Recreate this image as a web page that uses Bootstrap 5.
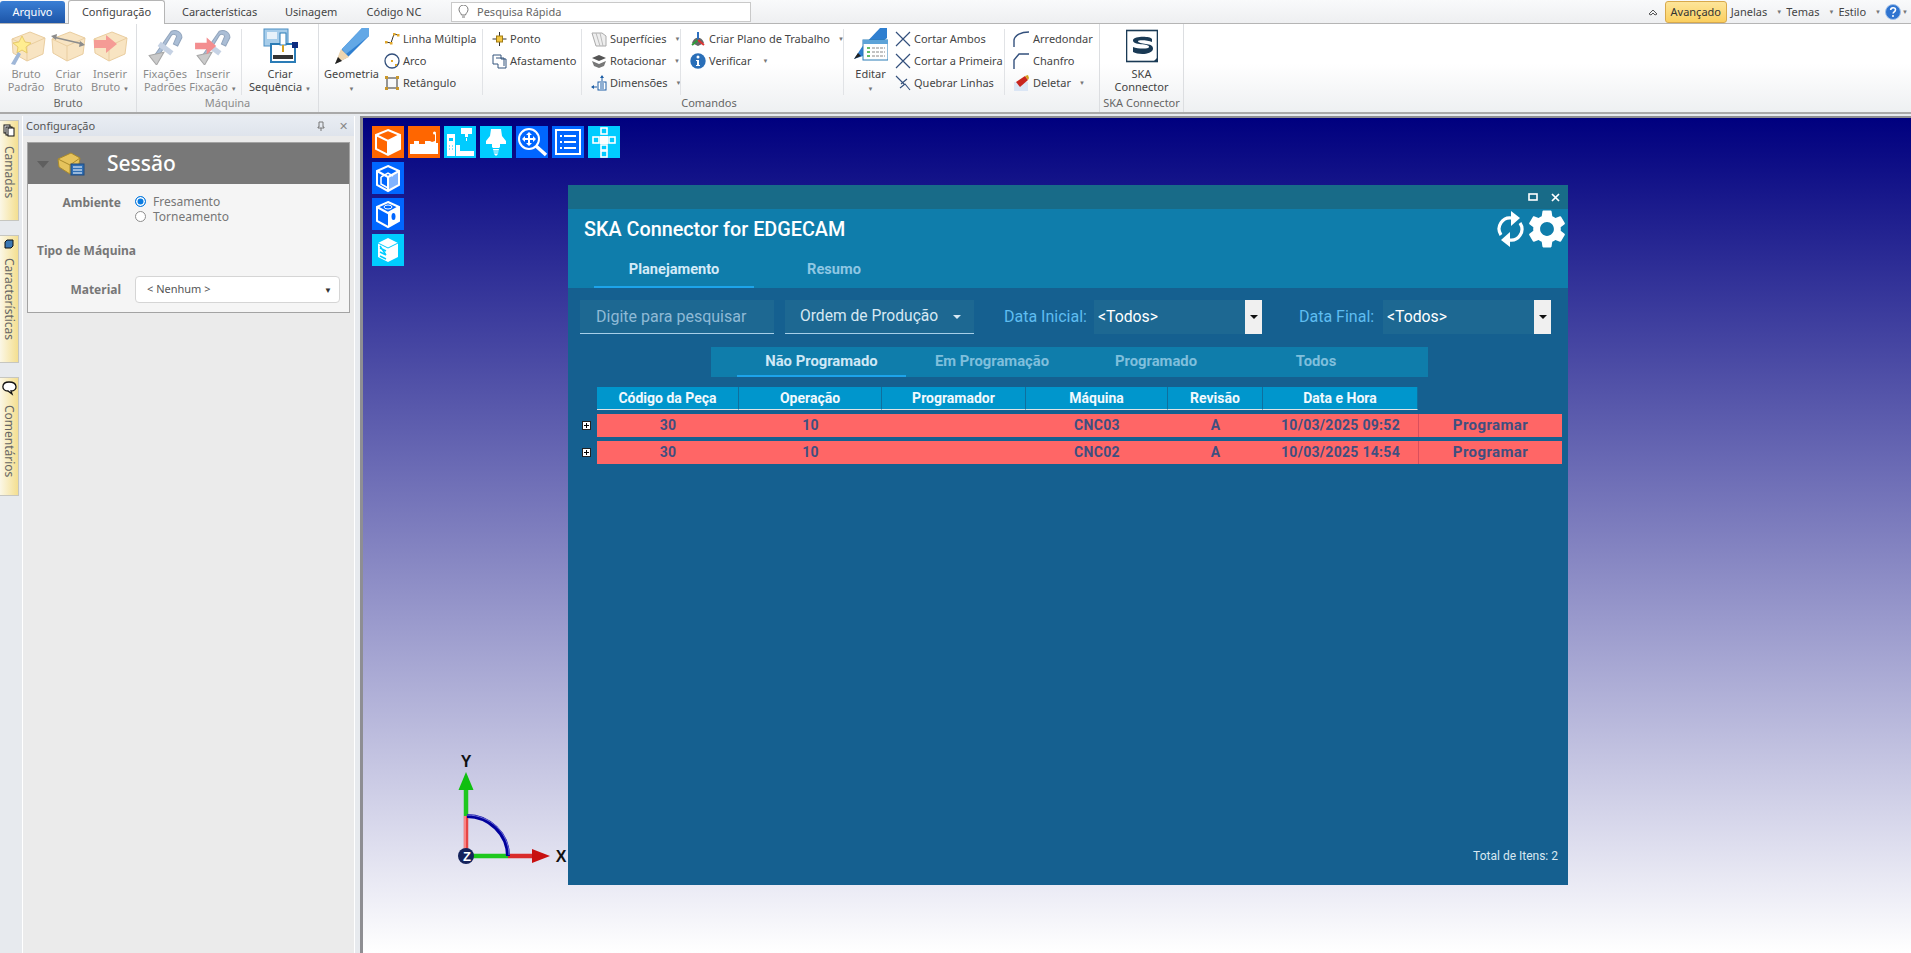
<!DOCTYPE html>
<html lang="pt-BR">
<head>
  <meta charset="UTF-8">
  <title>SKA Connector for EDGECAM</title>
  <link rel="stylesheet" href="https://cdn.jsdelivr.net/npm/bootstrap@5.3.1/dist/css/bootstrap.min.css">
  <style>
    html, body { height: 100%; overflow: hidden; }
    body { width: 1911px; height: 953px; background: #e7eaee; font-family: "Noto Sans", "Open Sans", sans-serif; font-size: 11px; color: #444; }
    svg { display: block; flex-shrink: 0; }
    .arr { font-size: 6px; color: #777; }

    /* top strip */
    .strip { height: 24px; background: linear-gradient(#f9fafb, #eeeff1); border-bottom: 1px solid #b5b5b5; padding-top: 1px; }
    .file-tab { width: 65px; height: 22px; background: linear-gradient(#3a7fd5, #1d55a8); color: #fff; border-radius: 3px 3px 0 0; font-size: 11px; }
    .tab-on { width: 97px; height: 24px; margin-left: 3px; background: #fff; border: 1px solid #b5b5b5; border-bottom: 0; border-radius: 3px 3px 0 0; }
    .tab-a { margin-left: 17px; width: 73px; }
    .tab-b { margin-left: 30px; width: 51px; }
    .tab-c { margin-left: 30px; width: 56px; }
    .quick { margin-left: 29px; width: 300px; height: 20px; background: #fff; border: 1px solid #c9c9c9; padding-left: 6px; color: #666; gap: 8px; }
    .adv { width: 62px; height: 22px; background: linear-gradient(#fde59a, #fbcf5f); border: 1px solid #d8a94c; border-radius: 3px; color: #333; margin: 0 4px 0 7px; }
    .rm-arr { margin: 0 4px 0 9px; }
    .rm-end { margin-left: 1px; margin-right: 3px; }

    /* ribbon */
    .ribbon { height: 90px; background: linear-gradient(#fff 45%, #eef0f2); border-bottom: 2px solid #a9a9a9; }
    .group { border-right: 1px solid #dcdee1; height: 88px; flex-shrink: 0; }
    .g-bruto { width: 137px; }
    .g-maq { width: 182px; }
    .g-cmd { width: 781px; }
    .g-ska { width: 84px; }
    .g-body { height: 73px; padding-top: 3px; }
    .g-label { height: 13px; line-height: 12px; text-align: center; color: #666; }
    .big { height: 70px; line-height: 13px; text-align: center; flex-shrink: 0; }
    .big svg { margin-bottom: 2px; height: 38px; }
    .dim { color: #8b8b8b; }
    .dim svg { opacity: .75; }
    .w42 { width: 42px; } .w48 { width: 48px; } .w65 { width: 65px; } .w76 { width: 76px; } .w49 { width: 49px; margin-left: 2px; }
    .sep { width: 1px; height: 66px; background: #e1e3e6; margin-top: 2px; flex-shrink: 0; }
    .small-item { height: 22px; gap: 3px; white-space: nowrap; }
    .small-col { flex-shrink: 0; padding-top: 1px; }
    .sc-a { width: 98px; } .sc-b { width: 98px; padding-left: 9px; } .sc-c { width: 98px; padding-left: 9px; }
    .sc-d { width: 162px; padding-left: 9px; } .sc-e { width: 109px; } .sc-f { width: 94px; padding-left: 8px; }
    .ml-arr { margin-left: 5px; }

    .main { height: 837px; margin-top: 2px; }
    /* side tabs */
    .side { width: 22px; padding-top: 4px; gap: 14px; }
    .vtab { width: 19px; background: linear-gradient(90deg, #fbf7e6, #f4df90); border: 1px solid #c6c6c0; border-left: 0; padding-top: 3px; color: #666; font-size: 12px; }
    .vtab span { writing-mode: vertical-rl; margin-top: 9px; line-height: 17px; }
    .vt-1 { height: 101px; } .vt-2 { height: 128px; } .vt-3 { height: 119px; }

    /* left panel */
    .panel { width: 333px; background: #ebebeb; border-left: 1px solid #fff; border-right: 1px solid #fff; }
    .panel-h { height: 20px; background: linear-gradient(#e9edf3, #dfe4ec); padding: 0 6px 0 3px; font-size: 11px; color: #555; }
    .panel-x { color: #888; font-size: 11px; margin-left: 14px; }
    .sess { margin: 6px 4px 0 4px; height: 171px; background: #f5f5f5; border: 1px solid #a3a3a3; border-radius: 0; }
    .sess-h { height: 41px; background: #787878; color: #fff; font-size: 21px; padding-left: 9px; }
    .sess-title { margin-left: 22px; font-weight: 500; }
    .lbl { width: 93px; text-align: right; font-weight: 700; color: #777; font-size: 12px; }
    .amb { margin-top: 10px; height: 30px; }
    .radio-line { height: 15px; gap: 7px; line-height: 15px; color: #777; font-size: 12px; margin-left: 14px; }
    .r { width: 11px; height: 11px; border-radius: 50%; border: 1px solid #8d8d8d; background: #fff; }
    .r-on { border-color: #0a7be0; box-shadow: inset 0 0 0 1.5px #fff; background: #0a7be0; }
    .tipo { margin: 18px 0 0 9px; font-weight: 700; color: #777; font-size: 12px; }
    .mat { margin-top: 16px; }
    .mat-sel { margin-left: 14px; width: 205px; height: 27px; background: #fff; border: 1px solid #d5d5d5; border-radius: 4px; padding: 0 7px 0 11px; color: #555; }
    .mat-sel .arr { font-size: 8px; color: #333; }

    /* viewport */
    .view { flex: 1; margin-left: 5px; border-left: 3px solid #8e8e93; border-top: 2px solid #8e8e93; background: linear-gradient(#00007f, #fff); }
    .tools { position: absolute; left: 9px; top: 8px; gap: 4px; }
    .tb { width: 32px; height: 32px; }
    .t-or { background: #ff6600; } .t-cy { background: #00ccff; } .t-bl { background: #0066ff; }
    .triad { position: absolute; left: 84px; top: 625px; }

    /* dialog */
    .dlg { position: absolute; left: 205px; top: 67px; width: 1000px; height: 700px; background: #156090; font-family: Roboto, sans-serif; color: #fff; }
    .dlg-bar { height: 24px; background: #186b88; padding-right: 8px; gap: 13px; }
    .dlg-head { height: 79px; background: #0f7dab; }
    .dlg-title { font-size: 19.8px; font-weight: 500; padding: 9px 0 0 16px; line-height: 24px; }
    .head-icons { position: absolute; right: -2px; top: 21px; }
    .nav-top { margin: 14px 0 0 26px; }
    .nav-top .nav-link { width: 160px; padding: 0; height: 32px; line-height: 26px; text-align: center; font-size: 14.6px; font-weight: 700; color: #8fc7e3; border-radius: 0; }
    .nav-top .nav-link.active { color: #d3ebf8; border-bottom: 2px solid #1da4ea; background: transparent; }
    .nav-top .nav-link + .nav-link { margin-left: 1px; }
    .dlg-tools { padding: 12px 0 0 12px; height: 59px; }
    .fld { background: #1d6892; border: 0; border-radius: 0; height: 34px; color: #fff; }
    .fld-search { width: 194px; border-bottom: 1px solid #a7cfe8; font-size: 16px; color: #8fbad6; padding-left: 16px; line-height: 34px; }
    .fld-drop { width: 189px; margin-left: 11px; border-bottom: 1px solid #a7cfe8; font-size: 15.6px; color: #d7e8f3; padding: 0 13px 0 15px; }
    .caret { width: 0; height: 0; border-left: 4px solid transparent; border-right: 4px solid transparent; border-top: 4px solid #d7e8f3; }
    .date-l { color: #5fbdf0; font-size: 16px; }
    .dl-1 { margin-left: 30px; width: 90px; } .dl-2 { margin-left: 37px; width: 84px; }
    .date-f { width: 168px; padding-left: 4px; font-size: 15.8px; }
    .date-b { margin-left: auto; width: 17px; height: 34px; background: #f0f0f0; }
    .date-b i { width: 0; height: 0; border-left: 4px solid transparent; border-right: 4px solid transparent; border-top: 4px solid #111; }
    .sub { margin: 0 0 0 143px; width: 717px; height: 30px; background: #0f7dab; padding-left: 26px; }
    .sub .nav-link { width: 169px; padding: 0; height: 30px; line-height: 29px; text-align: center; font-size: 14.8px; font-weight: 700; color: #7fbfdc; border-radius: 0; }
    .sub .nav-link.active { background: transparent; color: #cfe8f6; border-bottom: 2px solid #1da4ea; }
    .sub .nav-link:nth-child(2) { width: 172px; }
    .sub .nav-link:nth-child(3) { width: 156px; }
    .sub .nav-link:nth-child(4) { width: 164px; }

    table.grid { margin: 6px 0 0 10px; width: 984px; table-layout: fixed; border-collapse: separate; border-spacing: 0 4px; font-size: 14px; --bs-table-bg: transparent; }
    .grid th { background: #0096cc; height: 23px; padding: 0; text-align: center; vertical-align: middle; color: #f1f9fd; font-weight: 700; border-right: 1px solid #0f6f9e; }
    .grid th.blank { background: transparent; border: 0; }
    .grid td { background: #ff6666; height: 23px; padding: 0; text-align: center; vertical-align: middle; color: #3f4f80; font-weight: 700; border: 0; letter-spacing: .3px; }
    .grid td.exp { background: transparent; }
    .grid td.act { border: 1px solid #d94f5c; border-width: 0 0 0 1px; font-size: 15px; letter-spacing: .4px; }
    .plus { width: 9px; height: 9px; background: #fff; border: 1px solid #222; margin-left: 4px; color: #000; position: relative; }
    .plus::before { content: ""; position: absolute; left: 1px; right: 1px; top: 3px; height: 1px; background: #000; }
    .plus::after { content: ""; position: absolute; top: 1px; bottom: 1px; left: 3px; width: 1px; background: #000; }
    .c1 { width: 19px; } .c2 { width: 142px; } .c3 { width: 143px; } .c4 { width: 144px; } .c5 { width: 142px; } .c6 { width: 95px; } .c7 { width: 155px; }
    .total { position: absolute; right: 10px; bottom: 20px; font-size: 12px; color: #d8e8f2; }
  </style>
</head>
<body>
  <svg width="0" height="0" class="position-absolute">
    <symbol id="box" viewBox="0 0 36 36">
      <path d="M2 12 20 5l15 6-2 16-16 7-14-8z" fill="#f6dcae" stroke="#e3bd80"/>
      <path d="M2 12l15 7 18-8M17 19v15" fill="none" stroke="#e3bd80"/>
    </symbol>
    <symbol id="clamp" viewBox="0 0 36 36">
      <path d="M8 27 24 4c5-2 10 1 10 6l-4 8-4-2 3-7c0-2-3-3-5-1L13 26z" fill="#8fa9c9" stroke="#6f88a8"/>
      <path d="M14 14l12 9-3 4-12-9z" fill="#b3c4dc"/>
      <path d="M3 27 17 24 10 36z" fill="#b9b9b9" stroke="#8a8a8a"/>
    </symbol>
    <symbol id="cube" viewBox="0 0 32 32">
      <path d="M16 4 28 9v14l-12 6-12-6V9z" fill="none" stroke="#fff" stroke-width="2"/>
      <path d="M4 9l12 6 12-6M16 15v14" fill="none" stroke="#fff" stroke-width="2"/>
      <path d="M16 15 28 9v14l-12 6z" fill="#fff"/>
    </symbol>
  </svg>

  <div class="strip d-flex align-items-center">
    <div class="file-tab d-flex align-items-center justify-content-center">Arquivo</div>
    <div class="tab-on d-flex align-items-center justify-content-center">Configuração</div>
    <div class="tab-a text-center">Características</div>
    <div class="tab-b text-center">Usinagem</div>
    <div class="tab-c text-center">Código NC</div>
    <div class="quick d-flex align-items-center">
      <svg width="11" height="14" viewBox="0 0 11 14"><path d="M3.5 10C3 8 1 7 1 4.5a4.5 4.5 0 0 1 9 0C10 7 8 8 7.5 10zM4 12h3" fill="none" stroke="#777"/></svg>
      <span>Pesquisa Rápida</span>
    </div>
    <div class="ms-auto d-flex align-items-center">
      <svg width="10" height="8" viewBox="0 0 10 8"><path d="M1 6l4-4 4 4-2 1-2-2-2 2z" fill="none" stroke="#555"/></svg>
      <div class="adv d-flex align-items-center justify-content-center">Avançado</div>
      <span>Janelas</span><span class="arr rm-arr">▼</span>
      <span>Temas</span><span class="arr rm-arr">▼</span>
      <span>Estilo</span><span class="arr rm-arr">▼</span>
      <svg width="16" height="16" viewBox="0 0 16 16"><circle cx="8" cy="8" r="7.5" fill="#2f74d0" stroke="#9fc0ea"/><path d="M5.7 6c0-3 4.8-3 4.8-.2 0 2-2.4 2-2.4 3.7" fill="none" stroke="#fff" stroke-width="1.6"/><circle cx="8" cy="12" r="1" fill="#fff"/></svg>
      <span class="arr rm-end">▼</span>
    </div>
  </div>

  <div class="ribbon d-flex">
    <div class="group g-bruto">
      <div class="g-body d-flex justify-content-center">
        <div class="big w42 dim"><svg width="42" height="38" viewBox="0 0 42 38"><use href="#box" x="5" y="0" width="36" height="36"/><path d="M17 9l3 6 6 1-5 4 1 6-5-3-5 3 1-6-5-4 6-1z" fill="#ffe86b" stroke="#e0b93a"/><path d="M6 37l7-12 3 2-6 11z" fill="#7f9fcb"/></svg>Bruto<br>Padrão</div>
        <div class="big w42 dim"><svg width="42" height="38" viewBox="0 0 42 38"><use href="#box" x="3" y="0" width="36" height="36"/><path d="M6 10l30 7" stroke="#666" stroke-width="1.5"/><path d="M4 9l6-2-1 6zM38 18l-6 2 1-6z" fill="#666"/></svg>Criar<br>Bruto</div>
        <div class="big w42 dim"><svg width="42" height="38" viewBox="0 0 42 38"><use href="#box" x="3" y="0" width="36" height="36"/><path d="M5 13h12V8l11 9-11 9v-5H5z" fill="#f27a72"/></svg>Inserir<br>Bruto <span class="arr">▼</span></div>
      </div>
      <div class="g-label">Bruto</div>
    </div>

    <div class="group g-maq">
      <div class="g-body d-flex">
        <div class="big w48 dim ms-1"><svg class="mx-auto" width="38" height="38" viewBox="0 0 36 36"><use href="#clamp"/></svg>Fixações<br>Padrões</div>
        <div class="big w48 dim"><svg class="mx-auto" width="38" height="38" viewBox="0 0 36 36"><use href="#clamp"/><path d="M1 15h11v-5l9 8-9 8v-5H1z" fill="#f0686a"/></svg>Inserir<br>Fixação <span class="arr">▼</span></div>
        <div class="sep ms-1"></div>
        <div class="big w76">
          <svg class="mx-auto" width="36" height="38" viewBox="0 0 36 38">
            <rect x="2" y="2" width="24" height="17" fill="#a7cdea" stroke="#4d8fc4"/><rect x="5" y="5" width="10" height="7" fill="#e8f2fa"/>
            <rect x="9" y="17" width="24" height="18" fill="#fff" stroke="#2b7cb6" stroke-width="2"/><rect x="18" y="6" width="6" height="12" fill="#fff" stroke="#2b7cb6"/>
            <rect x="11" y="28" width="20" height="4" fill="#333"/><path d="M21 18v7" stroke="#d7a11f" stroke-width="2"/>
            <rect x="30" y="15" width="6" height="6" fill="#0c2c80"/>
          </svg>Criar<br>Sequência <span class="arr">▼</span></div>
      </div>
      <div class="g-label dim">Máquina</div>
    </div>

    <div class="group g-cmd">
      <div class="g-body d-flex">
        <div class="big w65">
          <svg class="mx-auto" width="36" height="38" viewBox="0 0 36 38"><path d="M1 37 8 22 28 1h7v8L14 30z" fill="#2f7fd0"/><path d="M28 1h7v8L12 27l-4-5z" fill="#63a8e6"/><path d="M1 37 7 22l8 8z" fill="#eed6b0"/><path d="M1 37l3-7 4 4z" fill="#222"/></svg>Geometria<br><span class="arr">▼</span></div>
        <div class="small-col sc-a">
          <div class="small-item d-flex align-items-center"><svg width="16" height="16" viewBox="0 0 16 16"><path d="M2 11l5 1 3-9 4 1" fill="none" stroke="#333"/><rect x="1" y="10" width="2.5" height="2.5" fill="#e3a92b"/><rect x="6" y="11" width="2.5" height="2.5" fill="#e3a92b"/><rect x="9" y="2" width="2.5" height="2.5" fill="#e3a92b"/><rect x="13" y="3" width="2.5" height="2.5" fill="#e3a92b"/></svg>Linha Múltipla</div>
          <div class="small-item d-flex align-items-center"><svg width="16" height="16" viewBox="0 0 16 16"><circle cx="8" cy="8" r="7" fill="none" stroke="#33507c" stroke-width="1.3"/><rect x="7" y="7" width="2" height="2" fill="#e3a92b"/><rect x="11" y="11" width="2" height="2" fill="#e3a92b"/></svg>Arco</div>
          <div class="small-item d-flex align-items-center"><svg width="16" height="16" viewBox="0 0 16 16"><rect x="3" y="3" width="10" height="10" fill="none" stroke="#333"/><rect x="1" y="1" width="3" height="3" fill="#c9972b"/><rect x="12" y="1" width="3" height="3" fill="#c9972b"/><rect x="1" y="12" width="3" height="3" fill="#c9972b"/><rect x="12" y="12" width="3" height="3" fill="#c9972b"/></svg>Retângulo</div>
        </div>
        <div class="sep"></div>
        <div class="small-col sc-b">
          <div class="small-item d-flex align-items-center"><svg width="15" height="14" viewBox="0 0 14 14"><path d="M7 0v14M0 7h14" stroke="#333"/><rect x="4" y="4" width="6" height="6" fill="#f3c63f" stroke="#a07a15"/></svg>Ponto</div>
          <div class="small-item d-flex align-items-center"><svg width="15" height="15" viewBox="0 0 15 15"><path d="M1 1h8v4h5v9H6v-4H1zM4 4h8v8" fill="#fff" stroke="#34557d"/></svg>Afastamento</div>
        </div>
        <div class="sep"></div>
        <div class="small-col sc-c">
          <div class="small-item d-flex align-items-center"><svg width="16" height="16" viewBox="0 0 16 16"><path d="M1 2h10l4 3v10H5z" fill="#eee" stroke="#aaa"/><path d="M5 2l4 13M9 2l3 13" stroke="#bbb"/></svg>Superfícies <span class="arr ml-arr">▼</span></div>
          <div class="small-item d-flex align-items-center"><svg width="16" height="16" viewBox="0 0 16 16"><path d="M1 5l7-3 7 3-7 3z" fill="#555"/><path d="M1 8l7 3 7-3-2 5-5 2-5-2z" fill="#777"/></svg>Rotacionar <span class="arr ml-arr">▼</span></div>
          <div class="small-item d-flex align-items-center"><svg width="16" height="16" viewBox="0 0 16 16"><rect x="7" y="7" width="8" height="8" fill="#fff" stroke="#1f5fa6"/><path d="M1 12h5M11 1v5M9 9h4M9 11h4M9 13h4" stroke="#1f5fa6"/><path d="M0 12l3-2v4zM11 0l2 3H9z" fill="#1f5fa6"/></svg>Dimensões <span class="arr ml-arr">▼</span></div>
        </div>
        <div class="sep"></div>
        <div class="small-col sc-d">
          <div class="small-item d-flex align-items-center"><svg width="16" height="16" viewBox="0 0 16 16"><path d="M2 12c2-7 10-7 12 0l-6 3z" fill="#333" opacity=".75"/><path d="M8 1v8" stroke="#2c6fc0" stroke-width="2"/><path d="M8 9 2 14" stroke="#2f9c39" stroke-width="2"/><path d="M8 9l6 5" stroke="#d33" stroke-width="2"/></svg>Criar Plano de Trabalho <span class="arr ml-arr">▼</span></div>
          <div class="small-item d-flex align-items-center"><svg width="16" height="16" viewBox="0 0 16 16"><circle cx="8" cy="8" r="7.7" fill="#2a6fb8"/><circle cx="8" cy="4" r="1.5" fill="#fff"/><path d="M6 7h3v5h1v1H6v-1h1V8H6z" fill="#fff"/></svg>Verificar <span class="arr ms-2">▼</span></div>
        </div>
        <div class="sep"></div>
        <div class="big w49">
          <svg class="mx-auto" width="34" height="38" viewBox="0 0 34 38"><path d="M0 32 8 20 26 1h7v10L12 28z" fill="#2f7fd0"/><path d="M0 32l4-6 3 3z" fill="#222"/><rect x="9" y="13" width="25" height="20" fill="#fff" stroke="#2b7cb6"/><rect x="9" y="13" width="25" height="4" fill="#5da3d8"/><path d="M13 21h3M13 25h3M13 29h3" stroke="#3a3" stroke-width="1.5"/><path d="M18 21h13M18 25h13M18 29h13" stroke="#888" stroke-dasharray="3 1"/></svg>Editar<br><span class="arr">▼</span></div>
        <div class="small-col sc-e">
          <div class="small-item d-flex align-items-center"><svg width="16" height="16" viewBox="0 0 16 16"><path d="M1 1 15 15M15 1 1 15" stroke="#33507c" stroke-width="1.2"/></svg>Cortar Ambos</div>
          <div class="small-item d-flex align-items-center"><svg width="16" height="16" viewBox="0 0 16 16"><path d="M1 1 15 15M15 1 1 15" stroke="#33507c" stroke-width="1.2"/></svg>Cortar a Primeira</div>
          <div class="small-item d-flex align-items-center"><svg width="16" height="16" viewBox="0 0 16 16"><path d="M1 1 9 9M5 13l5-4 5 6M12 4 6 9" stroke="#33507c" stroke-width="1.1" fill="none"/></svg>Quebrar Linhas</div>
        </div>
        <div class="sep"></div>
        <div class="small-col sc-f">
          <div class="small-item d-flex align-items-center gap-1"><svg width="16" height="16" viewBox="0 0 16 16"><path d="M1 16V9C2 4 8 1 16 1" fill="none" stroke="#33507c" stroke-width="1.4"/></svg>Arredondar</div>
          <div class="small-item d-flex align-items-center gap-1"><svg width="16" height="16" viewBox="0 0 16 16"><path d="M1 16V7l5-6h10" fill="none" stroke="#33507c" stroke-width="1.4"/></svg>Chanfro</div>
          <div class="small-item d-flex align-items-center gap-1"><svg width="16" height="16" viewBox="0 0 16 16"><path d="M1 7h14v9H1z" fill="#dbe6f5"/><path d="M3 7l9-6 3 4-8 7z" fill="#c8261e"/><path d="M12 1l3-1 1 3-1 2z" fill="#d7a11f"/></svg>Deletar <span class="arr ms-1">▼</span></div>
        </div>
      </div>
      <div class="g-label">Comandos</div>
    </div>

    <div class="group g-ska">
      <div class="g-body">
        <div class="big">
          <svg class="mx-auto" width="32" height="32" viewBox="0 0 32 32"><rect x="0.5" y="0.5" width="31" height="31" fill="#fff" stroke="#1a3a55" stroke-width="1.6"/><path d="M26 9C24 6 8 6 7 10c-1 6 17 3 16 7 0 2-11 2-16 0v5c5 3 19 3 20-3 1-7-15-4-15-8 0-1 10-1 14 1z" fill="#1a3a55"/><path d="M27 32l5-5v5z" fill="#1a3a55"/></svg>SKA<br>Connector</div>
      </div>
      <div class="g-label">SKA Connector</div>
    </div>
  </div>

  <div class="main d-flex">
    <div class="side d-flex flex-column">
      <div class="vtab vt-1 d-flex flex-column align-items-center"><svg width="12" height="13" viewBox="0 0 12 13"><rect x="1" y="1" width="6" height="8" fill="#fff" stroke="#111"/><rect x="3" y="3" width="6" height="8" fill="#fff" stroke="#111"/><rect x="5" y="4" width="6" height="8" fill="#fff" stroke="#111"/></svg><span>Camadas</span></div>
      <div class="vtab vt-2 d-flex flex-column align-items-center"><svg width="10" height="10" viewBox="0 0 10 10"><path d="M1 3l2-2h6v6L7 9H1z" fill="#3b78b5" stroke="#111"/></svg><span>Características</span></div>
      <div class="vtab vt-3 d-flex flex-column align-items-center"><svg width="16" height="15" viewBox="0 0 16 15"><path d="M8 1c9 0 9 9 2 9l1 3-4-3C0 10 0 1 8 1z" fill="#fff" stroke="#111" stroke-width="1.3"/></svg><span>Comentários</span></div>
    </div>

    <div class="panel">
      <div class="panel-h d-flex align-items-center">
        <span class="me-auto">Configuração</span>
        <svg width="8" height="10" viewBox="0 0 8 10"><path d="M2 1h4v5h1v1H1V6h1zM4 7v3" fill="none" stroke="#777"/></svg>
        <span class="panel-x">✕</span>
      </div>
      <div class="sess card">
        <div class="sess-h d-flex align-items-center">
          <svg width="12" height="8" viewBox="0 0 12 8"><path d="M0 1h12L6 8z" fill="#5f5f5f"/></svg>
          <svg class="ms-2" width="28" height="24" viewBox="0 0 28 24"><path d="M1 7 14 1l9 5-2 12-8 4L2 15z" fill="#e6c35c" stroke="#a98a2d"/><path d="M1 7l12 6 10-7M13 13v9" fill="none" stroke="#a98a2d"/><rect x="14" y="12" width="13" height="11" fill="#2f6fb5" stroke="#1e4a80"/><path d="M16 15h9M16 18h9M16 21h9" stroke="#fff"/></svg>
          <span class="sess-title">Sessão</span>
        </div>
        <div class="amb d-flex">
          <div class="lbl">Ambiente</div>
          <div>
            <div class="radio-line d-flex align-items-center"><span class="r r-on"></span>Fresamento</div>
            <div class="radio-line d-flex align-items-center"><span class="r"></span>Torneamento</div>
          </div>
        </div>
        <div class="tipo">Tipo de Máquina</div>
        <div class="mat d-flex align-items-center">
          <div class="lbl">Material</div>
          <div class="mat-sel d-flex align-items-center justify-content-between"><span>&lt; Nenhum &gt;</span><span class="arr">▼</span></div>
        </div>
      </div>
    </div>

    <div class="view position-relative">
      <div class="tools d-flex flex-column">
        <div class="d-flex gap-1">
          <div class="tb t-or"><svg width="32" height="32"><use href="#cube"/></svg></div>
          <div class="tb t-or"><svg width="32" height="32" viewBox="0 0 32 32"><path d="M2 18h4v-3h5v3h6v-3h5l2 1 3-1v-7h1v9h2v11H2z" fill="#fff"/><circle cx="26.5" cy="7" r="1.5" fill="#fff"/></svg></div>
          <div class="tb t-cy"><svg width="32" height="32" viewBox="0 0 32 32"><path d="M3 8h8v22H3zM12 19h4v6h14v5H12z" fill="#fff"/><rect x="5" y="12" width="4" height="3" fill="#00ccff"/><path d="M5 20h1M8 20h1M5 23h1M8 23h1" stroke="#00ccff"/><rect x="17" y="2" width="11" height="6" fill="#fff"/><path d="M21 8h3v3h-3zM22 12h1v3h-1z" fill="#fff"/><path d="M18 24h10" stroke="#00ccff"/></svg></div>
          <div class="tb t-cy"><svg width="32" height="32" viewBox="0 0 32 32"><path d="M11 3h10l1 7 4 5v3H6v-3l4-5zM12 18h8v3l-1 1h-6l-1-1zM13 23h6l-1 5-2 2-2-2z" fill="#fff"/><path d="M13 25h6M13 27h6" stroke="#00ccff"/></svg></div>
          <div class="tb t-bl"><svg width="32" height="32" viewBox="0 0 32 32"><circle cx="13" cy="13" r="10" fill="none" stroke="#fff" stroke-width="2"/><path d="M20 20l10 9" stroke="#fff" stroke-width="3.5"/><path d="M13 6l3 3h-2v3h3v-2l3 3-3 3v-2h-3v3h2l-3 3-3-3h2v-3H9v2l-3-3 3-3v2h3V9h-2z" fill="#fff"/></svg></div>
          <div class="tb t-bl"><svg width="32" height="32" viewBox="0 0 32 32"><rect x="4" y="4" width="24" height="24" fill="none" stroke="#fff" stroke-width="2"/><path d="M12 10h12M12 16h12M12 22h12" stroke="#fff" stroke-width="2"/><path d="M8 10h2M8 16h2M8 22h2" stroke="#fff" stroke-width="2"/></svg></div>
          <div class="tb t-cy"><svg width="32" height="32" viewBox="0 0 32 32"><rect x="13" y="2" width="6" height="6" fill="none" stroke="#fff" stroke-width="1.6"/><rect x="5" y="11" width="6" height="6" fill="none" stroke="#fff" stroke-width="1.6"/><rect x="12" y="10" width="8" height="8" fill="#fff"/><rect x="21" y="11" width="6" height="6" fill="none" stroke="#fff" stroke-width="1.6"/><rect x="13" y="19" width="6" height="5" fill="none" stroke="#fff" stroke-width="1.6"/><rect x="13" y="25" width="6" height="6" fill="none" stroke="#fff" stroke-width="1.6"/></svg></div>
        </div>
        <div class="tb t-bl"><svg width="32" height="32" viewBox="0 0 32 32"><path d="M16 4 27 9v14l-11 6-11-6V9z" fill="none" stroke="#fff" stroke-width="2"/><path d="M5 9l11 6 11-6M16 15v14" fill="none" stroke="#fff" stroke-width="2"/><path d="M16 15l11-6v14l-11 6z" fill="#fff" opacity=".5"/><path d="M9 15l7-4 5 3M9 15v7l7 4" fill="none" stroke="#fff" stroke-width="1.5"/></svg></div>
        <div class="tb t-bl"><svg width="32" height="32" viewBox="0 0 32 32"><path d="M16 4 27 9v14l-11 6-11-6V9z" fill="none" stroke="#fff" stroke-width="2"/><path d="M5 9l11 6 11-6" fill="none" stroke="#fff" stroke-width="2"/><path d="M16 15l11-6v14l-11 6z" fill="#fff"/><ellipse cx="21.5" cy="18.5" rx="2" ry="3.5" fill="#0066ff"/><ellipse cx="16" cy="9" rx="4" ry="2" fill="none" stroke="#fff"/></svg></div>
        <div class="tb t-cy"><svg width="32" height="32" viewBox="0 0 32 32"><path d="M16 4 26 9v14l-10 5-10-5V9z" fill="#fff"/><path d="M6 9l10 5 10-5" fill="none" stroke="#00ccff"/><path d="M8 14l6 3M8 18l6 3M8 22l6 3M8 12l6 9" stroke="#00ccff" stroke-width="1.4"/></svg></div>
      </div>

      <svg class="triad" width="126" height="126" viewBox="0 0 126 126">
        <text x="19" y="24" font-family="Liberation Sans, sans-serif" font-weight="700" font-size="16" text-anchor="middle" fill="#111">Y</text>
        <path d="M19 73V46" stroke="#1ec81e" stroke-width="4.5"/><path d="M19 29l7.5 18h-15z" fill="#0fbf0f"/>
        <path d="M19 113V73" stroke="#e64545" stroke-width="4.5"/><path d="M18 113V73" stroke="#ff9a9a" stroke-width="1.5"/>
        <path d="M19 113h42" stroke="#1ec81e" stroke-width="4.5"/><path d="M61 113h30" stroke="#d92b2b" stroke-width="4.5"/><path d="M103 113 85 106v14z" fill="#c81010"/>
        <path d="M20 73c22 0 41 18 41 40" fill="none" stroke="#00009c" stroke-width="4"/>
        <path d="M20 72c23 0 42 18 42 40" fill="none" stroke="#8a8ae8" stroke-width=".8"/>
        <text x="114" y="119" font-family="Liberation Sans, sans-serif" font-weight="700" font-size="16" text-anchor="middle" fill="#111">X</text>
        <circle cx="19" cy="113" r="8" fill="#14235c"/>
        <text x="20" y="118" font-family="Liberation Sans, sans-serif" font-weight="700" font-size="13" text-anchor="middle" fill="#fff">Z</text>
      </svg>

      <div class="dlg d-flex flex-column">
        <div class="dlg-bar d-flex align-items-center justify-content-end">
          <svg width="10" height="8" viewBox="0 0 10 8"><rect x="1" y="1" width="8" height="6" fill="none" stroke="#fff" stroke-width="1.6"/></svg>
          <svg width="9" height="9" viewBox="0 0 9 9"><path d="M1 1l7 7M8 1 1 8" stroke="#fff" stroke-width="1.7"/></svg>
        </div>
        <div class="dlg-head position-relative">
          <div class="dlg-title">SKA Connector for EDGECAM</div>
          <ul class="nav nav-top">
            <li class="nav-item"><a class="nav-link active" href="#">Planejamento</a></li>
            <li class="nav-item"><a class="nav-link" href="#">Resumo</a></li>
          </ul>
        </div>
        <div class="dlg-tools d-flex align-items-start">
          <div class="fld fld-search">Digite para pesquisar</div>
          <div class="fld fld-drop d-flex align-items-center justify-content-between"><span>Ordem de Produção</span><span class="caret"></span></div>
          <div class="fld date-l dl-1 d-flex align-items-center bg-transparent">Data Inicial:</div>
          <div class="fld date-f d-flex align-items-center">&lt;Todos&gt;<span class="date-b d-flex align-items-center justify-content-center"><i></i></span></div>
          <div class="fld date-l dl-2 d-flex align-items-center bg-transparent">Data Final:</div>
          <div class="fld date-f d-flex align-items-center">&lt;Todos&gt;<span class="date-b d-flex align-items-center justify-content-center"><i></i></span></div>
        </div>
        <ul class="nav nav-pills sub">
          <li class="nav-link active">Não Programado</li>
          <li class="nav-link">Em Programação</li>
          <li class="nav-link">Programado</li>
          <li class="nav-link">Todos</li>
        </ul>
        <table class="table grid">
          <thead>
            <tr><th class="blank c1"></th><th class="c2">Código da Peça</th><th class="c3">Operação</th><th class="c4">Programador</th><th class="c5">Máquina</th><th class="c6">Revisão</th><th class="c7">Data e Hora</th><th class="blank"></th></tr>
          </thead>
          <tbody>
            <tr><td class="exp"><div class="plus"></div></td><td>30</td><td>10</td><td></td><td>CNC03</td><td>A</td><td>10/03/2025 09:52</td><td class="act">Programar</td></tr>
            <tr><td class="exp"><div class="plus"></div></td><td>30</td><td>10</td><td></td><td>CNC02</td><td>A</td><td>10/03/2025 14:54</td><td class="act">Programar</td></tr>
          </tbody>
        </table>
        <div class="total">Total de Itens: 2</div>
        <div class="d-flex align-items-center head-icons">
          <svg width="27" height="38" viewBox="0 0 27 38"><path d="M4 25A11 11 0 0 1 15 8" fill="none" stroke="#fff" stroke-width="3.2"/><path d="M14 1l9 7-9 8z" fill="#fff"/><path d="M23 13A11 11 0 0 1 12 30" fill="none" stroke="#fff" stroke-width="3.2"/><path d="M13 37l-9-7 9-8z" fill="#fff"/></svg>
          <svg width="46" height="46" viewBox="0 0 24 24"><path fill="#fff" d="M19.14 12.94c.04-.3.06-.61.06-.94 0-.32-.02-.64-.07-.94l2.03-1.58a.49.49 0 0 0 .12-.61l-1.92-3.32a.488.488 0 0 0-.59-.22l-2.39.96c-.5-.38-1.03-.7-1.62-.94l-.36-2.54a.484.484 0 0 0-.48-.41h-3.84c-.24 0-.43.17-.47.41l-.36 2.54c-.59.24-1.13.57-1.62.94l-2.39-.96c-.22-.08-.47 0-.59.22L2.74 8.87c-.12.21-.08.47.12.61l2.03 1.58c-.05.3-.09.63-.09.94s.02.64.07.94l-2.03 1.58a.49.49 0 0 0-.12.61l1.92 3.32c.12.22.37.29.59.22l2.39-.96c.5.38 1.03.7 1.62.94l.36 2.54c.05.24.24.41.48.41h3.84c.24 0 .44-.17.47-.41l.36-2.54c.59-.24 1.13-.56 1.62-.94l2.39.96c.22.08.47 0 .59-.22l1.92-3.32c.12-.22.07-.47-.12-.61l-2.01-1.58zM12 15.6c-1.98 0-3.6-1.62-3.6-3.6s1.62-3.6 3.6-3.6 3.6 1.62 3.6 3.6-1.62 3.6-3.6 3.6z"/></svg>
        </div>
      </div>
    </div>
  </div>
  <script src="https://cdn.jsdelivr.net/npm/bootstrap@5.3.1/dist/js/bootstrap.bundle.min.js"></script>
</body>
</html>
